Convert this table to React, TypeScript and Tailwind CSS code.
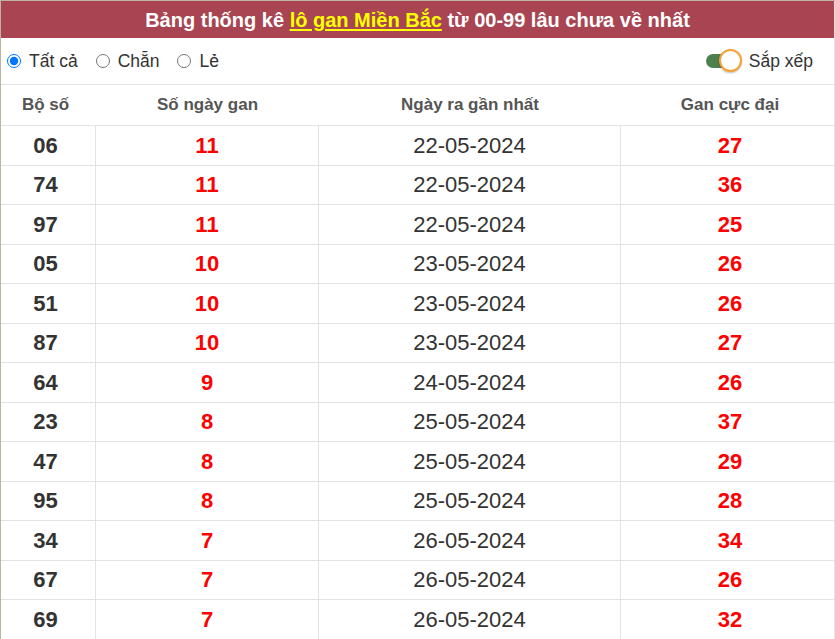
import { useState } from "react";

const rows: [string, number, string, number][] = [
  ["06", 11, "22-05-2024", 27],
  ["74", 11, "22-05-2024", 36],
  ["97", 11, "22-05-2024", 25],
  ["05", 10, "23-05-2024", 26],
  ["51", 10, "23-05-2024", 26],
  ["87", 10, "23-05-2024", 27],
  ["64", 9, "24-05-2024", 26],
  ["23", 8, "25-05-2024", 37],
  ["47", 8, "25-05-2024", 29],
  ["95", 8, "25-05-2024", 28],
  ["34", 7, "26-05-2024", 34],
  ["67", 7, "26-05-2024", 26],
  ["69", 7, "26-05-2024", 32],
];

const cols = "grid grid-cols-[95px_223px_302px_1fr]";

export default function App() {
  const [filter, setFilter] = useState<"all" | "even" | "odd">("all");
  const [sorted, setSorted] = useState(true);

  return (
    <div
      className="min-h-[639px] w-[835px] border-l border-t border-[#bfb3a5] bg-white"
      style={{ fontFamily: '"Liberation Sans", Arial, sans-serif' }}
    >
      <div className="flex h-[37px] items-center justify-center border-r border-[#e3dcd4] bg-[#a94452] text-[20px] font-bold text-white">
        Bảng thống kê&nbsp;
        <a href="#" className="text-[#ffff00] underline underline-offset-2">
          lô gan Miền Bắc
        </a>
        &nbsp;từ 00-99 lâu chưa về nhất
      </div>

      <div className="flex h-[47px] items-center justify-between border-b border-r border-[#e3e3e3] pl-[6px] pr-[21px] text-[17.5px] text-[#333]">
        <div className="flex items-center gap-[18px]">
          <Radio label="Tất cả" checked={filter === "all"} onChange={() => setFilter("all")} />
          <Radio label="Chẵn" checked={filter === "even"} onChange={() => setFilter("even")} />
          <Radio label="Lẻ" checked={filter === "odd"} onChange={() => setFilter("odd")} />
        </div>
        <button type="button" onClick={() => setSorted(!sorted)} className="flex items-center gap-[7px]">
          <span className="relative block h-[16px] w-[36px]">
            <span className={`absolute left-0 top-[1px] h-[14px] w-[28px] rounded-full ${sorted ? "bg-[#4e7f4f]" : "bg-[#bbb]"}`} />
            <span
              className={`absolute top-[-4px] h-[23px] w-[23px] rounded-full border-[2.5px] border-[#f5a238] bg-white shadow-[0_1px_2px_rgba(0,0,0,0.25)] ${sorted ? "left-[13px]" : "left-[-4px]"}`}
            />
          </span>
          <span>Sắp xếp</span>
        </button>
      </div>

      <div className={`${cols} h-[41px] border-b border-r border-[#e3e3e3] text-[17px] font-bold text-[#555]`}>
        <div className="flex items-center justify-center pr-[6px]">Bộ số</div>
        <div className="flex items-center justify-center">Số ngày gan</div>
        <div className="flex items-center justify-center">Ngày ra gần nhất</div>
        <div className="flex items-center justify-center pl-[5px]">Gan cực đại</div>
      </div>

      {rows.map(([num, days, date, max]) => (
        <div key={num} className={`${cols} h-[39.5px] border-b border-r border-[#e3e3e3] text-[22px]`}>
          <div className="flex items-center justify-center border-r border-[#e3e3e3] pr-[5px] font-bold text-[#333]">{num}</div>
          <div className="flex items-center justify-center border-r border-[#e3e3e3] font-bold text-[#ff0000]">{days}</div>
          <div className="flex items-center justify-center border-r border-[#e3e3e3] text-[#333]">{date}</div>
          <div className="flex items-center justify-center pl-[5px] font-bold text-[#ff0000]">{max}</div>
        </div>
      ))}
    </div>
  );
}

function Radio({ label, checked, onChange }: { label: string; checked: boolean; onChange: () => void }) {
  return (
    <label className="flex items-center gap-[8px]">
      <input type="radio" checked={checked} onChange={onChange} className="m-0 h-[14px] w-[14px] accent-[#0075ff]" />
      <span>{label}</span>
    </label>
  );
}
